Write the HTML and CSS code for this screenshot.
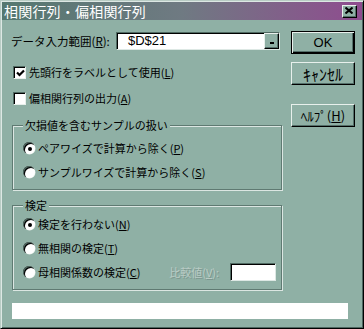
FILE: index.html
```html
<!DOCTYPE html>
<html lang="ja">
<head>
<meta charset="utf-8">
<title>相関行列・偏相関行列</title>
<link rel="stylesheet" href="styles.css">
</head>
<body>
<div class="window">
  <div class="titlebar">
    <span class="title">相関行列・偏相関行列</span>
    <span class="close"><svg width="8" height="7" viewBox="0 0 8 7"><path d="M0.5 0.5 L7.5 6.5 M7.5 0.5 L0.5 6.5" stroke="#000" stroke-width="2" fill="none"/></svg></span>
  </div>
  <div class="content">
    <div class="main">
      <div class="left">
        <div class="row-input">
          <span class="label">データ入力範囲(<u>R</u>):</span>
          <div class="field">
            <span class="field-text">$D$21</span>
            <span class="collapse"><span class="bar"></span></span>
          </div>
        </div>
        <div class="check first"><span class="box"><svg width="9" height="8" viewBox="0 0 9 8"><path d="M1 3.5 L3.5 6 L8 1.5" stroke="#000" stroke-width="2.2" fill="none"/></svg></span><span>先頭行をラベルとして使用(<u>L</u>)</span></div>
        <div class="check second"><span class="box"></span><span>偏相関行列の出力(<u>A</u>)</span></div>
        <fieldset class="group g1">
          <legend>欠損値を含むサンプルの扱い</legend>
          <div class="radio r-first"><span class="dot on"></span><span>ペアワイズで計算から除く(<u>P</u>)</span></div>
          <div class="radio"><span class="dot"></span><span>サンプルワイズで計算から除く(<u>S</u>)</span></div>
        </fieldset>
        <fieldset class="group g2">
          <legend>検定</legend>
          <div class="radio r-first2"><span class="dot on"></span><span>検定を行わない(<u>N</u>)</span></div>
          <div class="radio"><span class="dot"></span><span>無相関の検定(<u>T</u>)</span></div>
          <div class="radio r-last"><span class="dot"></span><span>母相関係数の検定(<u>C</u>)</span>
            <span class="disabled">比較値(<u>V</u>):</span>
            <span class="small-field"></span>
          </div>
        </fieldset>
      </div>
      <div class="buttons">
        <div class="btn default">OK</div>
        <div class="btn cancel">ｷｬﾝｾﾙ</div>
        <div class="btn help">ﾍﾙﾌﾟ(<u>H</u>)</div>
      </div>
    </div>
    <div class="status"></div>
  </div>
</div>
</body>
</html>
```
FILE: styles.css
```css
* { box-sizing: border-box; }
html, body { margin: 0; padding: 0; background: #8fb0a5; }
body {
  font-family: "Noto Sans CJK JP", "Liberation Sans", sans-serif;
  font-size: 11px;
  color: #000;
}
u { text-decoration: underline; text-underline-offset: 1px; }
.window {
  width: 364px;
  height: 329px;
  background: #8fb0a5;
  border-top: 1px solid #b8ccc4;
  border-left: 1px solid #b8ccc4;
  border-right: 1px solid #000;
  border-bottom: 1px solid #000;
  box-shadow: inset 1px 1px 0 #dde8e4, inset -1px -1px 0 #4d6660;
}
.titlebar {
  margin: 1px 1px 0 1px;
  height: 18px;
  background: linear-gradient(to right, #557870, #6f7a82 50%, #8f4c8f);
  display: flex;
  align-items: center;
  padding: 0 5px 0 2px;
}
.title {
  color: #fff;
  font-size: 14px;
  line-height: 18px;
  letter-spacing: 0.2px;
}
.close {
  margin-left: auto;
  width: 15px;
  height: 13px;
  background: #8fb0a5;
  border-top: 1px solid #e8f0ec;
  border-left: 1px solid #e8f0ec;
  border-right: 1px solid #000;
  border-bottom: 1px solid #000;
  box-shadow: inset -1px -1px 0 #55706a;
  display: flex;
  align-items: center;
  justify-content: center;
  padding-right: 1px;
  padding-bottom: 1px;
}
.close svg { display: block; }
.content { padding: 0 0 0 9px; }
.main { display: flex; gap: 8px; }
.left { width: 273px; }
.row-input {
  margin-top: 12px;
  height: 18px;
  display: flex;
  align-items: center;
}
.label { width: 106px; line-height: 18px; padding-left: 1px; font-size: 11.5px; }
.field {
  width: 164px;
  height: 18px;
  background: #fff;
  border-top: 1px solid #506a62;
  border-left: 1px solid #506a62;
  border-right: 1px solid #dde8e4;
  border-bottom: 1px solid #dde8e4;
  box-shadow: inset 1px 1px 0 #000;
  display: flex;
  align-items: center;
}
.field-text {
  padding-left: 11px;
  font-family: "Liberation Sans", sans-serif;
  font-size: 13px;
  line-height: 16px;
}
.collapse {
  margin-left: auto;
  width: 15px;
  height: 16px;
  background: #8fb0a5;
  border-top: 1px solid #e8f0ec;
  border-left: 1px solid #e8f0ec;
  border-right: 1px solid #000;
  border-bottom: 1px solid #000;
  box-shadow: inset -1px -1px 0 #55706a;
  display: flex;
  align-items: flex-end;
  justify-content: center;
  padding-bottom: 4px;
}
.bar { width: 4px; height: 2px; background: #000; }
.check {
  display: flex;
  align-items: center;
  height: 16px;
  line-height: 16px;
  gap: 3px;
  padding-left: 3px;
}
.check.first { margin-top: 14px; }
.check.second { margin-top: 10px; }
.box {
  width: 13px;
  height: 13px;
  background: #fff;
  border-top: 1px solid #506a62;
  border-left: 1px solid #506a62;
  border-right: 1px solid #e8f0ec;
  border-bottom: 1px solid #e8f0ec;
  box-shadow: inset 1px 1px 0 #000;
  display: flex;
  align-items: center;
  justify-content: center;
  padding: 1px 0 0 1px;
}
.box svg { display: block; }
.group {
  margin: 0 0 0 2px;
  width: 270px;
  padding: 0 5px 0 10px;
  border: 1px solid #5f7a72;
  box-shadow: inset 1px 1px 0 #dbe6e2, 1px 1px 0 #dbe6e2;
  min-inline-size: 0;
}
.group legend {
  padding: 0 2px;
  line-height: 16px;
  background: #8fb0a5;
}
.g1 { margin-top: 11px; padding-bottom: 9px; }
.g2 { margin-top: 7px; padding-bottom: 8px; }
.radio {
  display: flex;
  align-items: center;
  height: 16px;
  line-height: 16px;
  gap: 3px;
  margin-top: 8px;
}
.radio.r-first { margin-top: 7px; }
.radio.r-first2 { margin-top: 3px; }
.radio.r-last { height: 18px; margin-top: 7px; }
.dot {
  width: 12px;
  height: 12px;
  border-radius: 50%;
  background: #fff;
  box-shadow: inset 1px 1px 0 #506a62, inset 2px 2px 0 #000, 0.5px 0.5px 0 #e8f0ec;
  display: flex;
  align-items: center;
  justify-content: center;
  flex: none;
}
.dot.on::after {
  content: "";
  width: 4px;
  height: 4px;
  border-radius: 50%;
  background: #000;
  margin: 1px 0 0 1px;
}
.disabled {
  margin-left: auto;
  color: #b9ccc5;
  text-shadow: 1px 1px 0 #7d978f;
}
.small-field {
  margin-left: 8px;
  width: 46px;
  height: 18px;
  background: #fff;
  border-top: 1px solid #506a62;
  border-left: 1px solid #506a62;
  border-right: 1px solid #dde8e4;
  border-bottom: 1px solid #dde8e4;
  box-shadow: inset 1px 1px 0 #000;
}
.buttons { width: 64px; display: flex; flex-direction: column; }
.btn {
  height: 23px;
  display: flex;
  align-items: center;
  justify-content: center;
  border-top: 1px solid #e8f0ec;
  border-left: 1px solid #e8f0ec;
  border-right: 1px solid #000;
  border-bottom: 1px solid #000;
  box-shadow: inset -1px -1px 0 #55706a;
  line-height: 16px;
  font-size: 12px;
}
.btn.default {
  margin-top: 11px;
  border: 1px solid #000;
  box-shadow: inset 1px 1px 0 #e8f0ec, inset -1px -1px 0 #000, inset -2px -2px 0 #55706a;
  font-family: "Liberation Sans", sans-serif;
  font-size: 13px;
}
.btn.cancel { margin-top: 8px; font-size: 16px; }
.btn.help { margin-top: 19px; font-size: 13px; }
.status {
  margin: 13px 0 0 2px;
  width: 336px;
  height: 16px;
  background: #fff;
}
```
